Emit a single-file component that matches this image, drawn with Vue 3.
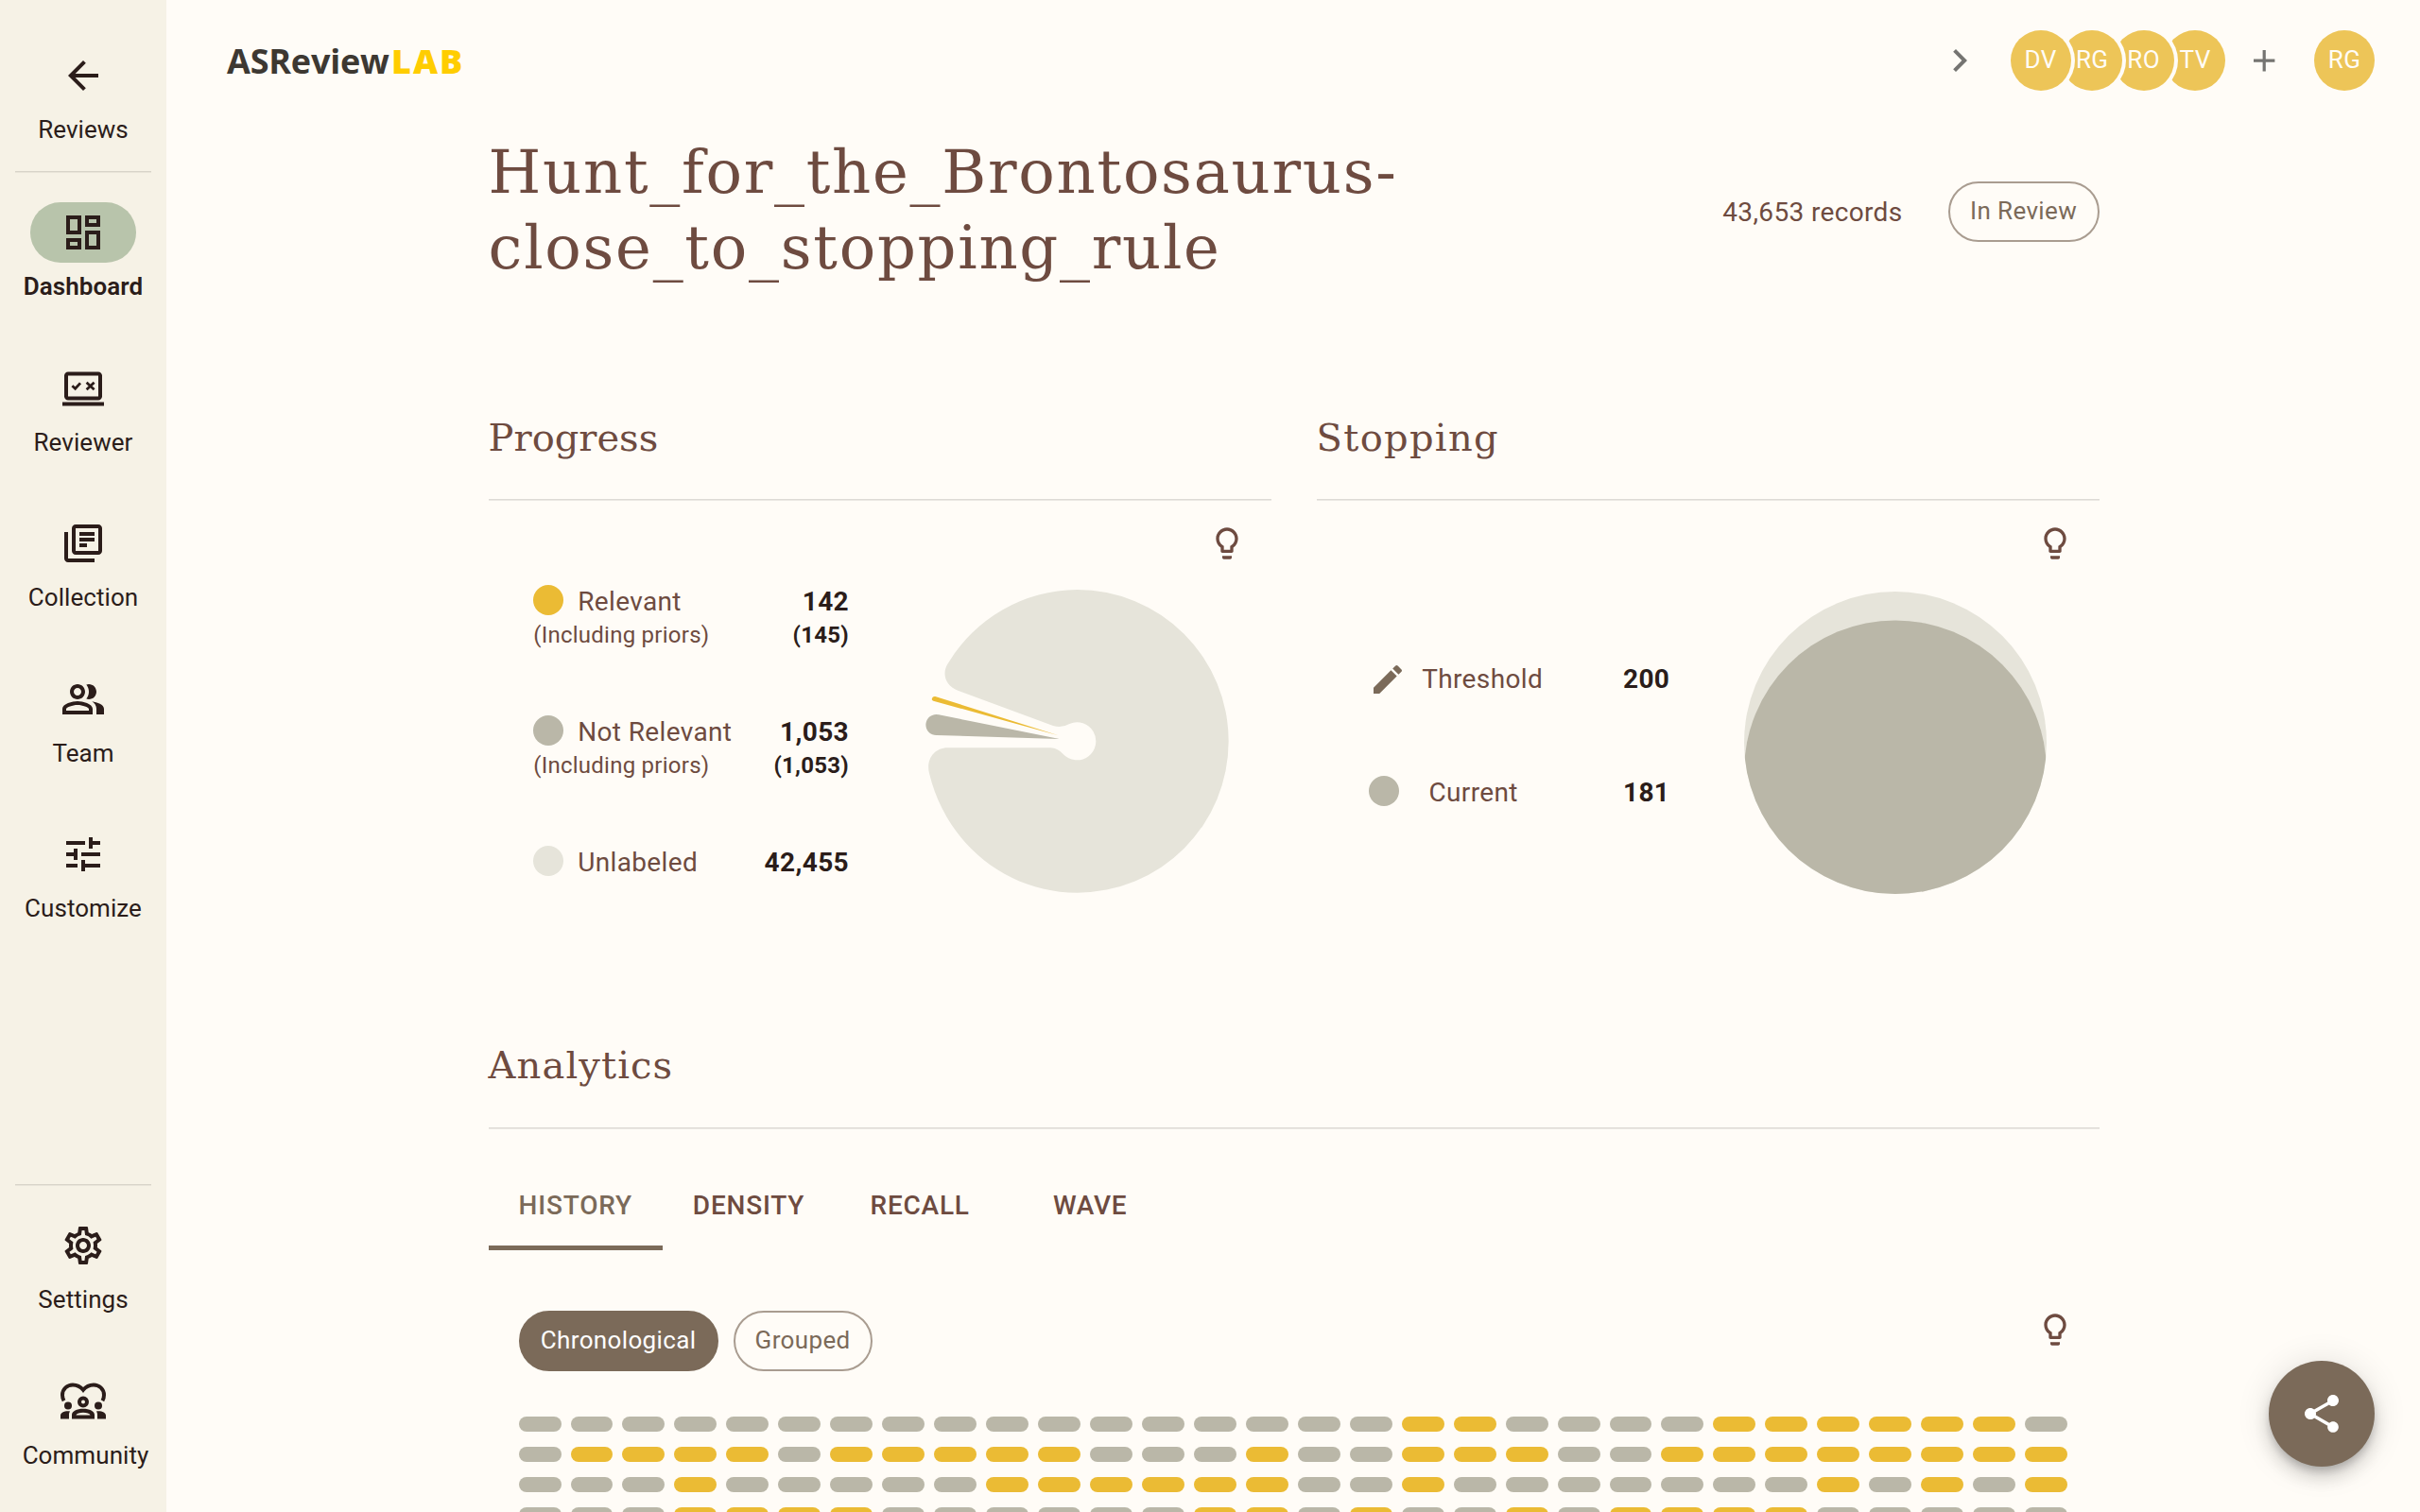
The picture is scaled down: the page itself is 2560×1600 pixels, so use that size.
<script setup>
const icons = {
  back: 'M20 11H7.83l5.59-5.59L12 4l-8 8 8 8 1.41-1.41L7.83 13H20v-2z',
  dashboard: 'M19 5v2h-4V5h4M9 5v6H5V5h4m10 8v6h-4v-6h4M9 17v2H5v-2h4M21 3h-8v6h8V3zM11 3H3v10h8V3zm10 8h-8v10h8V11zm-10 4H3v6h8v-6z',
  collection: 'M4 6H2v14c0 1.1.9 2 2 2h14v-2H4V6zm16-4H8c-1.1 0-2 .9-2 2v12c0 1.1.9 2 2 2h12c1.1 0 2-.9 2-2V4c0-1.1-.9-2-2-2zm0 14H8V4h12v12zM10 9h8v2h-8zm0 3h4v2h-4zm0-6h8v2h-8z',
  team: 'M16.67 13.13C18.04 14.06 19 15.32 19 17v3h4v-3c0-2.18-3.57-3.47-6.33-3.87zM15 12c2.21 0 4-1.79 4-4s-1.79-4-4-4c-.47 0-.91.1-1.33.24C14.5 5.27 15 6.58 15 8s-.5 2.73-1.33 3.76c.42.14.86.24 1.33.24zM9 12c2.21 0 4-1.79 4-4s-1.79-4-4-4-4 1.79-4 4 1.79 4 4 4zm0-6c1.1 0 2 .9 2 2s-.9 2-2 2-2-.9-2-2 .9-2 2-2zM9 13c-2.67 0-8 1.34-8 4v3h16v-3c0-2.66-5.33-4-8-4zm6 5H3v-.99C3.2 16.29 6.3 15 9 15s5.8 1.29 6 2v1z',
  tune: 'M3 17v2h6v-2H3zM3 5v2h10V5H3zm10 16v-2h8v-2h-8v-2h-2v6h2zM7 9v2H3v2h4v2h2V9H7zm14 4v-2H11v2h10zm-6-4h2V7h4V5h-4V3h-2v6z',
  settings: 'M19.43 12.98c.04-.32.07-.64.07-.98 0-.34-.03-.66-.07-.98l2.11-1.65c.19-.15.24-.42.12-.64l-2-3.46c-.09-.16-.26-.25-.44-.25-.06 0-.12.01-.17.03l-2.49 1c-.52-.4-1.08-.73-1.69-.98l-.38-2.65C14.46 2.18 14.25 2 14 2h-4c-.25 0-.46.18-.49.42l-.38 2.65c-.61.25-1.17.59-1.69.98l-2.49-1c-.06-.02-.12-.03-.18-.03-.17 0-.34.09-.43.25l-2 3.46c-.13.22-.07.49.12.64l2.11 1.65c-.04.32-.07.65-.07.98 0 .33.03.66.07.98l-2.11 1.65c-.19.15-.24.42-.12.64l2 3.46c.09.16.26.25.44.25.06 0 .12-.01.17-.03l2.49-1c.52.4 1.08.73 1.69.98l.38 2.65c.03.24.24.42.49.42h4c.25 0 .46-.18.49-.42l.38-2.65c.61-.25 1.17-.59 1.69-.98l2.49 1c.06.02.12.03.18.03.17 0 .34-.09.43-.25l2-3.46c.12-.22.07-.49-.12-.64l-2.11-1.65zm-1.98-1.71c.04.31.05.52.05.73 0 .21-.02.43-.05.73l-.14 1.13.89.7 1.08.84-.7 1.21-1.27-.51-1.04-.42-.9.68c-.43.32-.84.56-1.25.73l-1.06.43-.16 1.13-.2 1.35h-1.4l-.19-1.35-.16-1.13-1.06-.43c-.43-.18-.83-.41-1.23-.71l-.91-.7-1.06.43-1.27.51-.7-1.21 1.08-.84.89-.7-.14-1.13c-.03-.31-.05-.54-.05-.74s.02-.43.05-.73l.14-1.13-.89-.7-1.08-.84.7-1.21 1.27.51 1.04.42.9-.68c.43-.32.84-.56 1.25-.73l1.06-.43.16-1.13.2-1.35h1.39l.19 1.35.16 1.13 1.06.43c.43.18.83.41 1.23.71l.91.7 1.06-.43 1.27-.51.7 1.21-1.07.85-.89.7.14 1.13zM12 8c-2.21 0-4 1.79-4 4s1.79 4 4 4 4-1.79 4-4-1.79-4-4-4zm0 6c-1.1 0-2-.9-2-2s.9-2 2-2 2 .9 2 2-.9 2-2 2z',
  bulb: 'M9 21c0 .55.45 1 1 1h4c.55 0 1-.45 1-1v-1H9v1zm3-19C8.14 2 5 5.14 5 9c0 2.38 1.19 4.47 3 5.74V17c0 .55.45 1 1 1h6c.55 0 1-.45 1-1v-2.26c1.81-1.27 3-3.36 3-5.74 0-3.86-3.14-7-7-7zm2.85 11.1-.85.6V16h-4v-2.3l-.85-.6C7.8 12.16 7 10.63 7 9c0-2.76 2.24-5 5-5s5 2.24 5 5c0 1.63-.8 3.16-2.15 4.1z',
  chevron: 'M10 6 8.59 7.41 13.17 12l-4.58 4.59L10 18l6-6z',
  add: 'M19 13h-6v6h-2v-6H5v-2h6V5h2v6h6v2z',
  edit: 'M3 17.25V21h3.75L17.81 9.94l-3.75-3.75L3 17.25zM20.71 7.04c.39-.39.39-1.02 0-1.41l-2.34-2.34a.9959.9959 0 0 0-1.41 0l-1.83 1.83 3.75 3.75 1.83-1.83z',
  share: 'M18 16.08c-.76 0-1.44.3-1.96.77L8.91 12.7c.05-.23.09-.46.09-.7s-.04-.47-.09-.7l7.05-4.11c.54.5 1.25.81 2.04.81 1.66 0 3-1.34 3-3s-1.34-3-3-3-3 1.34-3 3c0 .24.04.47.09.7L8.04 9.81C7.5 9.31 6.79 9 6 9c-1.66 0-3 1.34-3 3s1.34 3 3 3c.79 0 1.5-.31 2.04-.81l7.12 4.16c-.05.21-.08.43-.08.65 0 1.61 1.31 2.92 2.92 2.92 1.61 0 2.92-1.31 2.92-2.92s-1.31-2.92-2.92-2.92z',
}

const mainNav = [
  { label: 'Dashboard', icon: 'dashboard', active: true },
  { label: 'Reviewer', icon: 'reviewer' },
  { label: 'Collection', icon: 'collection' },
  { label: 'Team', icon: 'team' },
  { label: 'Customize', icon: 'tune' },
]
const footNav = [
  { label: 'Settings', icon: 'settings' },
  { label: 'Community', icon: 'community' },
]

const members = ['DV', 'RG', 'RO', 'TV']

const legend = [
  { name: 'Relevant', value: '142', priors: '(145)', color: '#ebbb34' },
  { name: 'Not Relevant', value: '1,053', priors: '(1,053)', color: '#bab7a8' },
  { name: 'Unlabeled', value: '42,455', color: '#e6e4da' },
]

const tabs = ['HISTORY', 'DENSITY', 'RECALL', 'WAVE']

// Labelling decisions in order, 30 per row: 1 = relevant, 0 = not relevant
const history = [
  '000000000000000001100001111110',
  '011110111110001001110011111111',
  '000100000111111001000000010101',
  '000111100000011010010111100000',
].join('').split('')
</script>

<template>
  <div class="app">
    <nav class="sidebar">
      <div class="nav-item">
        <span class="pill"><svg class="i48" viewBox="0 0 24 24"><path :d="icons.back" /></svg></span>
        <span class="nav-label">Reviews</span>
      </div>
      <hr class="rule side-rule" />
      <div class="nav-group">
        <div v-for="n in mainNav" :key="n.label" class="nav-item" :class="{ active: n.active }">
          <span class="pill">
            <svg class="i48" viewBox="0 0 24 24">
              <template v-if="n.icon === 'reviewer'">
                <path fill-rule="evenodd" d="M4 3.2h16c1.1 0 2 .9 2 2v11c0 1.1-.9 2-2 2H4c-1.1 0-2-.9-2-2v-11c0-1.1.9-2 2-2zm0 2v11h16v-11zM1 19.2h22v2H1z" />
                <path class="line" d="M6.2 10.6l1.6 1.5 2.7-2.9M13.8 8.9l4 3.7M17.8 8.9l-4 3.7" />
              </template>
              <path v-else :d="icons[n.icon]" />
            </svg>
          </span>
          <span class="nav-label">{{ n.label }}</span>
        </div>
      </div>
      <div class="spacer"></div>
      <hr class="rule side-rule foot-rule" />
      <div class="nav-group foot">
        <div v-for="n in footNav" :key="n.label" class="nav-item">
          <span class="pill">
            <svg class="i48" viewBox="0 0 24 24">
              <template v-if="n.icon === 'community'">
                <path class="heart" d="M1.8 11.6C1.2 10.6 1 9.5 1 8.6 1 5.4 3.6 3.2 6.5 3.2c2.5 0 4.2 1.1 5.5 2.7 1.300-1.600 3-2.700 5.500-2.700 2.900 0 5.500 2.200 5.500 5.400 0 .9-.2 2-.8 3" />
                <circle cx="4" cy="14.200" r="2" /><circle cx="20" cy="14.200" r="2" />
                <path fill-rule="evenodd" d="M12 9.200a3 3 0 1 0 0 6 3 3 0 0 0 0-6zm0 2a1 1 0 1 1 0 2 1 1 0 0 1 0-2z" />
                <path fill-rule="evenodd" d="M6 21.200v-2.200c0-1.800 2.700-3.100 6-3.100s6 1.300 6 3.100v2.200zm2.200-2h7.600c-.4-.7-2-1.300-3.800-1.300s-3.400.6-3.800 1.300z" />
                <path d="M0 21.200v-1.800c0-1.300 1.700-2.300 4-2.300.4 0 .7 0 1 .1-.4.6-.5 1.200-.5 1.900v2.100zM24 21.200v-1.800c0-1.300-1.700-2.300-4-2.300-.4 0-.7 0-1 .1.4.6.5 1.200.5 1.900v2.100z" />
              </template>
              <path v-else :d="icons[n.icon]" />
            </svg>
          </span>
          <span class="nav-label" :class="{ shifted: n.icon === 'community' }">{{ n.label }}</span>
        </div>
      </div>
    </nav>

    <main class="main">
      <header class="topbar">
        <div class="logo"><span>ASReview</span><span class="lab">LAB</span></div>
        <div class="top-actions">
          <svg class="i48 grey" viewBox="0 0 24 24"><path :d="icons.chevron" /></svg>
          <div class="avatars">
            <span v-for="(m, i) in members" :key="m" class="avatar" :style="{ zIndex: members.length - i }">{{ m }}</span>
          </div>
          <svg class="add grey" viewBox="0 0 24 24"><path :d="icons.add" /></svg>
          <span class="avatar me">RG</span>
        </div>
      </header>

      <div class="page">
        <div class="title-row">
          <h1>Hunt_for_the_Brontosaurus-<br />close_to_stopping_rule</h1>
          <div class="meta">
            <span class="records">43,653 records</span>
            <span class="chip status">In Review</span>
          </div>
        </div>

        <div class="columns">
          <section class="card">
            <h2>Progress</h2>
            <hr class="rule" />
            <div class="hint"><svg class="i40" viewBox="0 0 24 24"><path :d="icons.bulb" /></svg></div>
            <div class="progress-body">
              <ul class="legend">
                <li v-for="l in legend" :key="l.name">
                  <div class="row">
                    <span class="dot" :style="{ background: l.color }"></span>
                    <span class="name">{{ l.name }}</span>
                    <b>{{ l.value }}</b>
                  </div>
                  <div v-if="l.priors" class="row small">
                    <span>(Including priors)</span>
                    <b>{{ l.priors }}</b>
                  </div>
                </li>
              </ul>
              <svg class="donut" viewBox="100 240 990 990">
                <path fill="#e6e4da" d="M596 249A481 481 0 0 1 596 1211C372 1211 180 1054 127 832C116 788 143 751 185 751L513 751Q533 751 552 771A60 60 0 1 0 572 675Q548 689 520 681L218 569C178 554 166 516 186 484A481 481 0 0 1 596 249Z" />
                <path fill="#ebbb34" d="M537 712L146 588Q137 587 135 597Q136 601 140 602Z" />
                <path fill="#bab7a8" d="M537 722L157 646A33 33 0 1 0 151 711L537 723Z" />
              </svg>
            </div>
          </section>

          <section class="card">
            <h2 class="wide">Stopping</h2>
            <hr class="rule" />
            <div class="hint"><svg class="i40" viewBox="0 0 24 24"><path :d="icons.bulb" /></svg></div>
            <div class="stopping-body">
              <div class="stops">
                <div class="row">
                  <svg class="i40 pencil" viewBox="0 0 24 24"><path :d="icons.edit" /></svg>
                  <span class="name">Threshold</span>
                  <b>200</b>
                </div>
                <div class="row">
                  <span class="dot current"></span>
                  <span class="name">Current</span>
                  <b>181</b>
                </div>
              </div>
              <svg class="gauge" viewBox="0 0 320 320">
                <clipPath id="gauge-clip"><circle cx="160" cy="160" r="160" /></clipPath>
                <circle cx="160" cy="160" r="160" fill="#e6e4da" />
                <circle cx="160" cy="190.400" r="160" fill="#bab7a8" clip-path="url(#gauge-clip)" />
              </svg>
            </div>
          </section>
        </div>

        <section class="analytics">
          <h2 class="mid">Analytics</h2>
          <hr class="rule" />
          <div class="tabs">
            <span v-for="(t, i) in tabs" :key="t" class="tab" :class="{ on: i === 0 }">{{ t }}</span>
          </div>
          <div class="filters">
            <span class="chip solid">Chronological</span>
            <span class="chip grouped">Grouped</span>
            <svg class="i40" viewBox="0 0 24 24"><path :d="icons.bulb" /></svg>
          </div>
          <div class="history">
            <i v-for="(h, i) in history" :key="i" :class="{ hit: h === '1' }"></i>
          </div>
        </section>
      </div>
    </main>

    <button class="fab"><svg class="i48" viewBox="0 0 24 24"><path :d="icons.share" /></svg></button>
  </div>
</template>

<style>
html, body { margin: 0; background: #fffcf7; overflow: hidden; }
</style>

<style scoped>
.app {
  display: flex;
  width: 2560px;
  height: 1600px;
  overflow: hidden;
  background: #fffcf7;
  color: #6e4b40;
  font: 400 28px/42px Roboto, sans-serif;
  letter-spacing: 0.36px;
}
svg { display: block; flex: none; fill: currentColor; }
.i48 { width: 48px; height: 48px; }
.i40 { width: 40px; height: 40px; }
.rule {
  width: 100%;
  height: 2px;
  margin: 0;
  border: 0;
  background: linear-gradient(#dedad5 50%, #ebe8e3 50%);
}

.sidebar {
  display: flex;
  flex-direction: column;
  flex: none;
  box-sizing: border-box;
  width: 176px;
  padding: 48px 0 40px;
  background: #f6f2e6;
  color: #2b1d1a;
  letter-spacing: 0.06px;
}
.nav-group { display: flex; flex-direction: column; gap: 55.5px; }
.nav-group.foot { gap: 56px; }
.nav-item { display: flex; flex-direction: column; align-items: center; }
.pill {
  display: flex;
  align-items: center;
  justify-content: center;
  width: 112px;
  height: 64px;
  border-radius: 32px;
}
.active .pill { background: #b8c4ab; }
.nav-label { margin-top: 5px; font-size: 26px; line-height: 40px; }
.nav-label.shifted { padding-left: 5px; }
.active .nav-label { font-weight: 600; }
.side-rule {
  width: 144px;
  margin: 24px 16px 31px;
  background: linear-gradient(#d8d4c9 50%, #e8e4d9 50%);
}
.foot-rule { margin-top: 0; }
.spacer { flex: 1; }
.line { fill: none; stroke: currentColor; stroke-width: 1.4; }
.heart { fill: none; stroke: currentColor; stroke-width: 2; }

.main { flex: 1; min-width: 0; }
.topbar {
  display: flex;
  align-items: center;
  justify-content: space-between;
  height: 128px;
  padding: 0 48px 0 64px;
}
.logo {
  display: flex;
  padding-top: 2px;
  color: #3d3832;
  font: 700 36px/48px "Open Sans", sans-serif;
  letter-spacing: -0.2px;
}
.logo > span:first-child { width: 172px; }
.lab {
  margin-left: 2px;
  color: #ffcd00;
  font-weight: 800;
  letter-spacing: 2px;
}
.top-actions { display: flex; align-items: center; }
.grey { color: #757471; }
.avatars { display: flex; margin: 0 22px 0 30px; isolation: isolate; }
.avatar {
  position: relative;
  box-sizing: border-box;
  width: 64px;
  height: 64px;
  padding-bottom: 2px;
  border-radius: 50%;
  background: #edc558;
  box-shadow: 0 0 0 4px #fffcf7;
  color: #fffcf7;
  font-size: 26px;
  line-height: 62px;
  text-align: center;
}
.avatar + .avatar { margin-left: -9.5px; }
.add { width: 38.4px; height: 38.4px; }
.me { margin-left: 33.500px; }

.page { width: 1704px; margin-left: 340.6px; padding-top: 14px; }
.title-row { display: flex; align-items: center; justify-content: space-between; }
h1, h2 { margin: 0; font-family: "DejaVu Serif", serif; font-weight: 400; }
h1 { font-size: 64px; line-height: 80px; letter-spacing: 1.7px; }
h2 { margin-bottom: 37px; font-size: 40px; line-height: 56px; letter-spacing: 0; }
h2.wide { letter-spacing: 1.3px; }
h2.mid { margin-bottom: 38px; letter-spacing: 1.1px; }
.meta { display: flex; align-items: center; gap: 48px; padding-top: 4px; }
.records { padding-top: 2px; }
.chip {
  box-sizing: border-box;
  height: 64px;
  padding-bottom: 2px;
  border: 2px solid #a99c90;
  border-radius: 32px;
  color: #7b6a59;
  font-size: 26px;
  line-height: 58px;
  text-align: center;
}
.status { width: 160px; }

.columns {
  display: grid;
  grid-template-columns: 828px 828px;
  gap: 48px;
  height: 664px;
  margin-top: 133px;
}
.hint { display: flex; justify-content: flex-end; padding: 25px 27px 0 0; }
.row { display: flex; align-items: center; }
.row b { color: #2b1d1a; font-weight: 700; }
.dot {
  flex: none;
  width: 32px;
  height: 32px;
  margin-bottom: 4px;
  border-radius: 50%;
}
.progress-body { display: flex; padding-left: 47.6px; }
.legend { width: 333.8px; margin: 21px 76px 0 0; padding: 0; list-style: none; }
.legend li { height: 138px; }
.legend .row { justify-content: space-between; }
.legend .name { flex: 1; margin-left: 15px; }
.legend .small { margin-top: -1px; font-size: 24px; line-height: 30px; letter-spacing: 0.25px; }
.donut { width: 330px; height: 330px; margin-top: 25.5px; }

.stopping-body { display: flex; padding-left: 55.4px; }
.stops { display: flex; flex-direction: column; gap: 78px; width: 324px; margin: 103px 73px 0 0; }
.stops .row { height: 42px; }
.pencil { margin-bottom: 1px; color: #7b6a59; }
.pencil + .name { margin-left: 16.2px; }
.current { background: #bab7a8; }
.current + .name { margin-left: 31.5px; }
.stops .name { flex: 1; }
.stops b { width: 55px; }
.gauge { width: 320px; height: 320px; margin-top: 30.5px; }

.analytics { padding-top: 0; }
.tabs { display: flex; margin-top: 32px; }
.tab {
  box-sizing: border-box;
  min-width: 180px;
  height: 96px;
  padding: 28px 32px 0;
  font-weight: 500;
  letter-spacing: 0.78px;
  text-align: center;
}
.tab.on { border-bottom: 5px solid #7b6a59; color: #7b6a59; }
.filters { display: flex; gap: 16px; margin: 64px 27px 48px 32px; }
.filters svg { margin-left: auto; }
.solid { width: 211px; border-color: #7b6a59; background: #7b6a59; color: #fff; }
.grouped { width: 147px; }
.history {
  display: grid;
  grid-template-columns: repeat(30, 1fr);
  grid-auto-rows: 16px;
  gap: 16px 10px;
  width: 1638.5px;
  margin-left: 32px;
}
.history i { border-radius: 8px; background: #bab7a8; }
.history .hit { background: #ebbb34; }

.fab {
  position: fixed;
  right: 48px;
  bottom: 48px;
  display: flex;
  align-items: center;
  justify-content: center;
  width: 112px;
  height: 112px;
  padding: 0;
  border: 0;
  border-radius: 50%;
  background: #7b6a59;
  box-shadow: 0 6px 10px -2px rgba(0, 0, 0, 0.2), 0 12px 20px rgba(0, 0, 0, 0.14), 0 2px 36px rgba(0, 0, 0, 0.12);
  color: #fff;
}
</style>
